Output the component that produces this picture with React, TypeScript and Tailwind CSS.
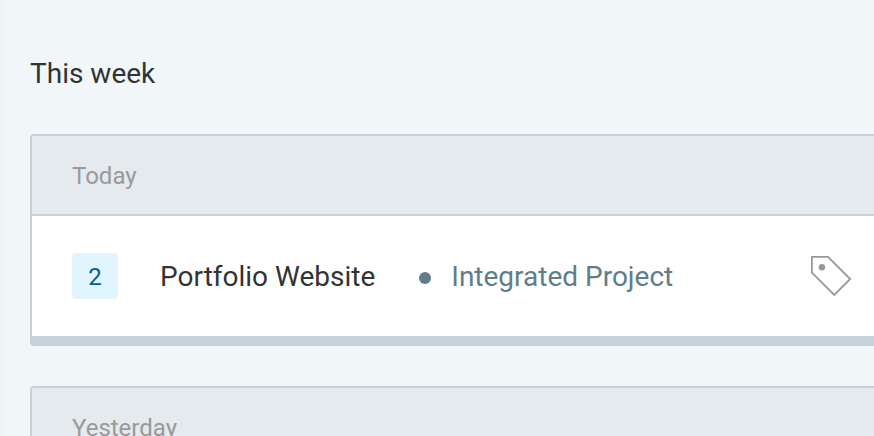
type Project = {
  count: number;
  name: string;
  client: string;
};

type Day = {
  label: string;
  projects: Project[];
};

const days: Day[] = [
  {
    label: "Today",
    projects: [{ count: 2, name: "Portfolio Website", client: "Integrated Project" }],
  },
  { label: "Yesterday", projects: [] },
];

function TagIcon() {
  return (
    <svg
      width="42"
      height="42"
      viewBox="0 0 42 42"
      fill="none"
      stroke="#999999"
      strokeWidth="1.8"
      aria-hidden="true"
    >
      <path d="M1.9 1.9H18L40.2 24L24.3 40L1.9 17.6Z" />
      <circle cx="11.9" cy="12.2" r="3.2" fill="#999999" stroke="none" />
    </svg>
  );
}

function ProjectRow({ project }: { project: Project }) {
  return (
    <li className="flex h-[120px] items-center bg-white pl-10 pr-[22px]">
      <span className="flex size-[46px] shrink-0 items-center justify-center rounded bg-[#e1f5fe] pt-0.5 text-2xl text-[#015f8c]">
        {project.count}
      </span>
      <span className="ml-[42px] whitespace-nowrap pt-0.5 text-[28px] leading-8 text-[#333333]">
        {project.name}
      </span>
      <span className="ml-11 flex items-center gap-5 whitespace-nowrap pt-0.5 text-[28px] leading-8 text-[#607d8b]">
        <span className="mt-0.5 size-3 rounded-full bg-[#607d8b]" />
        {project.client}
      </span>
      <button type="button" aria-label="Tags" className="ml-auto shrink-0">
        <TagIcon />
      </button>
    </li>
  );
}

function DayCard({ day }: { day: Day }) {
  return (
    <section className="overflow-hidden rounded-l border-2 border-r-0 border-b-10 border-[#c5d2d9] bg-white">
      <h2 className="flex h-20 items-center border-b-2 border-[#c5d2d9] bg-[#e4eaee] pl-10 pt-0.5 text-2xl text-[#999999]">
        {day.label}
      </h2>
      <ul>
        {day.projects.map((project) => (
          <ProjectRow key={project.name} project={project} />
        ))}
      </ul>
    </section>
  );
}

export default function App() {
  return (
    <div className="flex h-screen overflow-hidden bg-[#f1f6f9] font-['Roboto',sans-serif] antialiased">
      <div className="w-2 shrink-0 bg-linear-to-r from-[#edf3f6] to-[#f1f6f9]" />
      <main className="min-w-0 flex-1 pl-[22px] pt-[58px]">
        <h1 className="text-[28px] leading-8 text-[#333333]">This week</h1>
        <div className="mt-11 flex flex-col gap-10">
          {days.map((day) => (
            <DayCard key={day.label} day={day} />
          ))}
        </div>
      </main>
    </div>
  );
}
